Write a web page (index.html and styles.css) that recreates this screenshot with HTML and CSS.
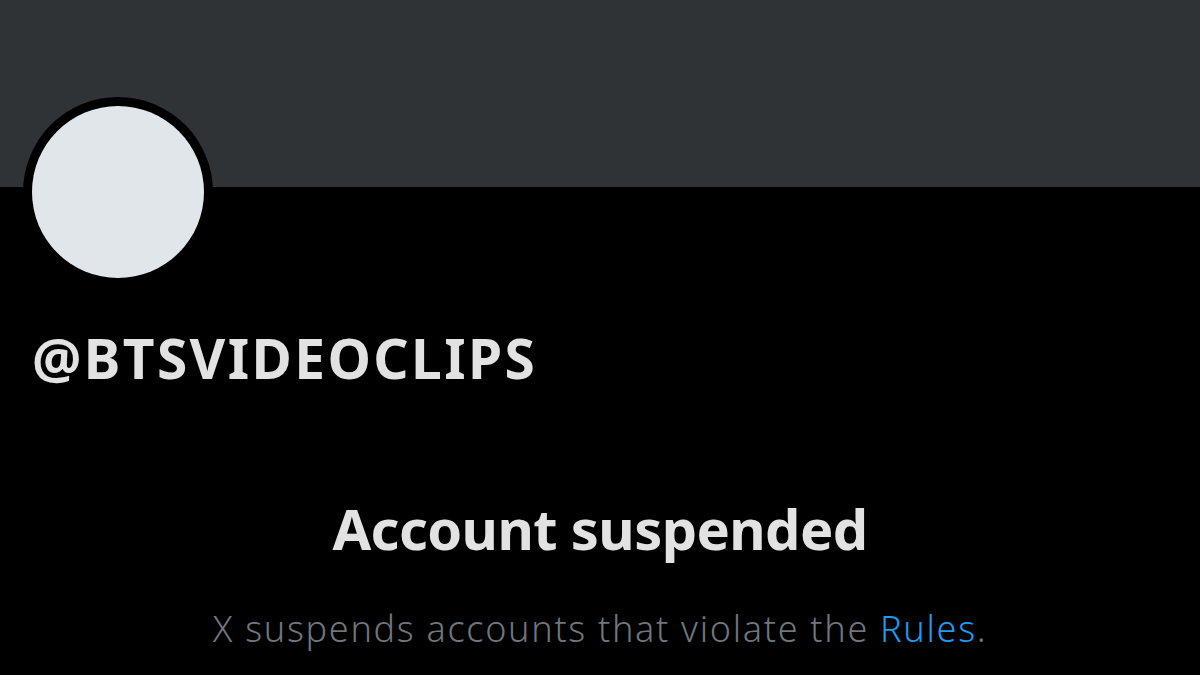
FILE: index.html
```html
<!DOCTYPE html>
<html>
<head>
<meta charset="utf-8">
<link rel="stylesheet" href="styles.css">
</head>
<body>
<div class="page">
  <div class="banner"></div>
  <div class="profile">
    <div class="avatar"><div class="avatar-inner"></div></div>
    <div class="handle">@BTSVIDEOCLIPS</div>
  </div>
  <div class="notice">
    <div class="title">Account suspended</div>
    <div class="sub">X suspends accounts that violate the <span class="link">Rules</span>.</div>
  </div>
</div>
</body>
</html>
```

FILE: styles.css
```css
html, body {
  margin: 0;
  padding: 0;
  background: #000;
}
.page {
  width: 1200px;
  height: 675px;
  overflow: hidden;
  background: #000;
  display: flex;
  flex-direction: column;
}
.banner {
  height: 187px;
  background: #2f3336;
  flex-shrink: 0;
}
.profile {
  padding-left: 23px;
  display: flex;
  flex-direction: column;
  align-items: flex-start;
}
.avatar {
  margin-top: -90px;
  width: 190px;
  height: 190px;
  border-radius: 50%;
  background: #000;
  display: flex;
  align-items: center;
  justify-content: center;
}
.avatar-inner {
  width: 172px;
  height: 172px;
  border-radius: 50%;
  background: #e1e6ea;
}
.handle {
  margin-top: 36px;
  margin-left: 9px;
  font-family: "Noto Sans", "Liberation Sans", sans-serif;
  font-weight: 700;
  font-size: 55px;
  letter-spacing: 2.4px;
  line-height: 70px;
  color: #e2e2e2;
}
.notice {
  margin-top: 103px;
  display: flex;
  flex-direction: column;
  align-items: center;
  text-align: center;
}
.title {
  font-family: "Noto Sans", "Liberation Sans", sans-serif;
  font-weight: 700;
  font-size: 56px;
  letter-spacing: -0.6px;
  line-height: 64px;
  color: #e2e2e2;
}
.sub {
  margin-top: 47px;
  font-family: "Noto Sans", "Liberation Sans", sans-serif;
  font-weight: 300;
  font-size: 36px;
  letter-spacing: 1.7px;
  line-height: 44px;
  color: #71767b;
}
.link {
  color: #1d9bf0;
}
```
